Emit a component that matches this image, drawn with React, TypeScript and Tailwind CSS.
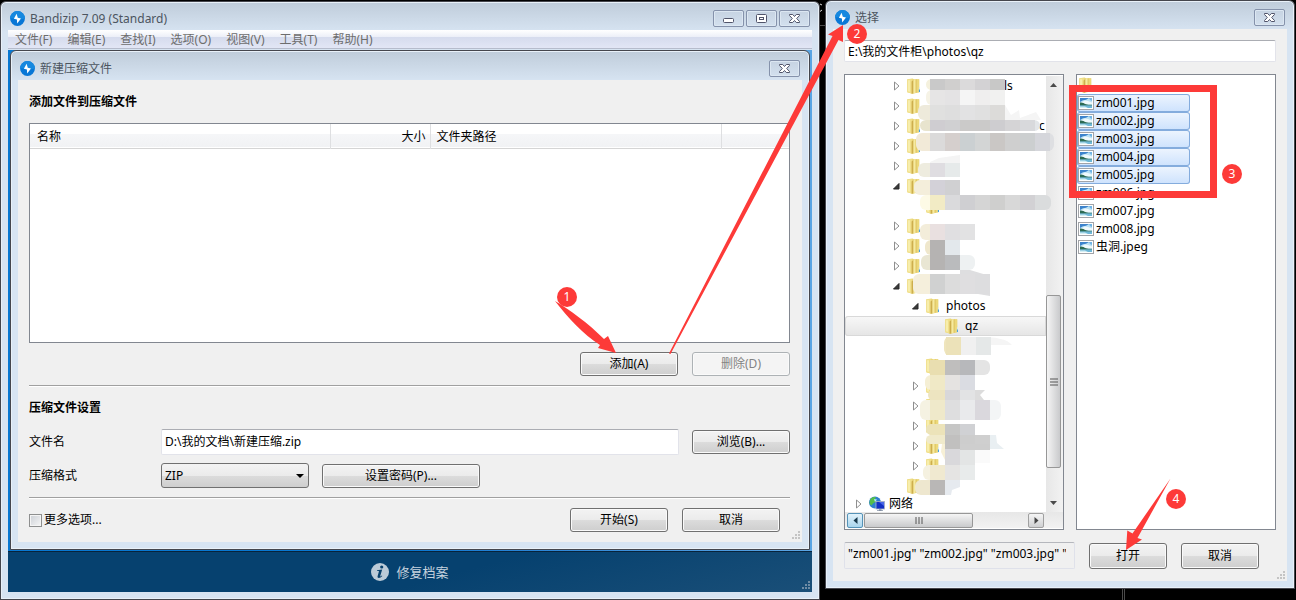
import type { ButtonHTMLAttributes, ReactNode } from "react";
import clsx from "clsx";

type CaptionKind = "minimize" | "maximize" | "close";

type TreeRow = {
  indent: string;
  icon?: "folder" | "network";
  state?: "open" | "closed";
  label?: string;
  labelGap?: string;
  selected?: boolean;
};

const MENU = ["文件(F)", "编辑(E)", "查找(I)", "选项(O)", "视图(V)", "工具(T)", "帮助(H)"];

const ROOT = "pl-[10px]";
const LEVEL_1 = "pl-[48px]";
const LEVEL_2 = "pl-[67px]";
const LEVEL_3 = "pl-[86px]";

const TREE: TreeRow[] = [
  { indent: LEVEL_1, state: "closed", label: "ls", labelGap: "pl-[83px]" },
  { indent: LEVEL_1, state: "closed" },
  { indent: LEVEL_1, state: "closed", label: "c", labelGap: "pl-[118px]" },
  { indent: LEVEL_1, state: "closed" },
  { indent: LEVEL_1, state: "closed" },
  { indent: LEVEL_1, state: "open" },
  { indent: LEVEL_2 },
  { indent: LEVEL_1, state: "closed" },
  { indent: LEVEL_1, state: "closed" },
  { indent: LEVEL_1, state: "closed" },
  { indent: LEVEL_1, state: "open" },
  { indent: LEVEL_2, state: "open", label: "photos" },
  { indent: LEVEL_3, label: "qz", selected: true },
  { indent: LEVEL_3 },
  { indent: LEVEL_2 },
  { indent: LEVEL_2, state: "closed" },
  { indent: LEVEL_2, state: "closed" },
  { indent: LEVEL_2, state: "closed" },
  { indent: LEVEL_2, state: "closed" },
  { indent: LEVEL_2, state: "closed" },
  { indent: LEVEL_1 },
  { indent: ROOT, icon: "network", state: "closed", label: "网络", labelGap: "pl-1" },
];

const FILES = [
  { name: "zm001.jpg", selected: true },
  { name: "zm002.jpg", selected: true },
  { name: "zm003.jpg", selected: true },
  { name: "zm004.jpg", selected: true },
  { name: "zm005.jpg", selected: true },
  { name: "zm006.jpg", selected: false },
  { name: "zm007.jpg", selected: false },
  { name: "zm008.jpg", selected: false },
  { name: "虫洞.jpeg", selected: false },
];

// Pixelated strips over private folder names: top, height, round left start, its fill,
// then 15px cells from cellX, and an optional rounded tail.
type Strip = {
  y: number;
  h: number;
  capX: number;
  cap: string;
  cellX: number;
  cells: string[];
  endX?: number;
  end?: string;
};

const STRIPS: Strip[] = [
  { y: 79, h: 11, capX: 926, cap: "#f5f1dd", cellX: 930, cells: ["#c9c9c9", "#d0cfce", "#dbdadb", "#d3d2d4", "#c8c8c7"] },
  { y: 90, h: 15, capX: 926, cap: "#f6f3e6", cellX: 930, cells: ["#e6e5e5", "#e4e3e4", "#f5f5f5", "#efeeee", "#f1f1f0"] },
  { y: 105, h: 15, capX: 918, cap: "#eeeadb", cellX: 930, cells: ["#e0e0df", "#dedede", "#e2e2e3", "#e0e0e0", "#dcdbd9"] },
  { y: 120, h: 11, capX: 920, cap: "#e8e4ce", cellX: 930, cells: ["#cfcdd1", "#d0d0d2", "#cbcac9", "#cbcac9", "#cecdd0", "#d5d4d6", "#d8d9dc"], endX: 1040, end: "#e3e6e9" },
  { y: 133, h: 18, capX: 916, cap: "#f2ead8", cellX: 930, cells: ["#dbdada", "#d5cfcd", "#cbd0d2", "#d3d5d5", "#cac7c5", "#cfcfcf", "#cccfd0", "#d5d6db"], endX: 1054, end: "#dedfe2" },
  { y: 163, h: 14, capX: 918, cap: "#eeecdf", cellX: 930, cells: ["#dfdde1", "#e6eaea"] },
  { y: 180, h: 15, capX: 914, cap: "#f4eedb", cellX: 930, cells: ["#d3d1d8", "#d0d0d2"] },
  { y: 195, h: 15, capX: 920, cap: "#fdfae6", cellX: 930, cells: ["#f2ebc5", "#dadadc", "#cfcfd2", "#d5d5d5", "#cfcfce", "#d8d8d8", "#d2d1d4"], endX: 1051, end: "#dadcdd" },
  { y: 224, h: 16, capX: 920, cap: "#f3edda", cellX: 930, cells: ["#e9e0e0", "#e0dfe1", "#e2e2e3"] },
  { y: 240, h: 15, capX: 925, cap: "#efe7cc", cellX: 930, cells: ["#b5b3b2", "#e3e8ec"] },
  { y: 255, h: 15, capX: 921, cap: "#e9e6d3", cellX: 930, cells: ["#b5b3b2", "#babbbd"], endX: 975, end: "#eef1f2" },
  { y: 274, h: 20, capX: 913, cap: "#f5efdc", cellX: 930, cells: ["#d0d1d1", "#dcdcdc", "#dfdee0", "#dddddf"] },
  { y: 337, h: 18, capX: 944, cap: "#efe5bd", cellX: 946, cells: ["#ece2b9", "#f0f0f0", "#e5e8e8"] },
  { y: 360, h: 15, capX: 929, cap: "#e9deb0", cellX: 930, cells: ["#e9deb0", "#bfbebd", "#b7b8bb"], endX: 990, end: "#e4e4e4" },
  { y: 375, h: 15, capX: 925, cap: "#f5efd5", cellX: 930, cells: ["#f0e9c6", "#e5e3e1", "#dadce2"] },
  { y: 390, h: 10, capX: 928, cap: "#ede4c0", cellX: 930, cells: ["#ede4c0", "#d8d7d9", "#e2e3e4"] },
  { y: 400, h: 20, capX: 920, cap: "#f5f2e2", cellX: 930, cells: ["#efe9ca", "#dededf", "#e9eaec", "#dad8dd"], endX: 1001, end: "#f3f5f6" },
  { y: 424, h: 11, capX: 926, cap: "#ece3b9", cellX: 930, cells: ["#ece3b9", "#c6c6c5", "#d0d1d4"] },
  { y: 435, h: 9, capX: 926, cap: "#f0eacb", cellX: 930, cells: ["#f0eacb", "#c1c0bf", "#cdcdcd", "#cfcfcf"] },
  { y: 465, h: 15, capX: 923, cap: "#f5f1e0", cellX: 930, cells: ["#f0e9d0", "#e5e4e3", "#e8ebeb"] },
  { y: 480, h: 15, capX: 915, cap: "#eee7cf", cellX: 930, cells: ["#b9b7b6"] },
];

function BandizipIcon() {
  return (
    <svg className="size-[15px] shrink-0" viewBox="0 0 15 15" aria-hidden="true">
      <circle cx="7.5" cy="7.5" r="7.4" fill="#0877d6" />
      <path d="M0.1 7.5a7.4 7.4 0 0 1 14.8 0c-5 2-10-1-14.8 0z" fill="#1688df" />
      <path d="M6.6 2.8 3.9 7.7l3 .8.3 4 3.8-4.9-3.2-.9z" fill="#fff" />
    </svg>
  );
}

function CaptionButton({ kind }: { kind: CaptionKind }) {
  return (
    <button
      type="button"
      aria-label={kind}
      className="flex h-[17px] w-[31px] items-center justify-center rounded-[2px] border border-[#8592ab] bg-linear-to-b from-[#c6d3e2] to-[#d3e0ee] shadow-[inset_0_0_0_1px_#dce7f2]"
    >
      <svg width="13" height="11" viewBox="0 0 13 11" fill="#fff" stroke="#50546a" aria-hidden="true">
        {kind === "minimize" && <rect x="1.5" y="5.5" width="10" height="4" rx="1" />}
        {kind === "maximize" && (
          <>
            <rect x="1.5" y="1.5" width="10" height="8" rx="1" />
            <rect x="4.5" y="4.5" width="4" height="2" />
          </>
        )}
        {kind === "close" && (
          <path d="M1.5 1.5h3.2l1.8 2 1.8-2h3.2v1L8.7 5.5l2.8 3v1H8.3l-1.8-2-1.8 2H1.5v-1l2.8-3-2.8-3z" />
        )}
      </svg>
    </button>
  );
}

type FrameProps = {
  title: string;
  captions: CaptionKind[];
  className?: string;
  children: ReactNode;
};

function WindowFrame({ title, captions, className, children }: FrameProps) {
  return (
    <section
      className={clsx(
        "min-w-0 rounded-t-[6px] border border-[#45464d] bg-[#d7e4f2] bg-[linear-gradient(#bfccda,#d7e4f2_30px)] px-[7px] pb-[7px] shadow-[inset_0_0_0_1px_#e9f1f9]",
        className,
      )}
    >
      <header className="flex h-7 items-center gap-[5px] px-[2px] pt-1">
        <BandizipIcon />
        <h1 className="flex-1 truncate pt-[2px] text-[#4c5560]">{title}</h1>
        <div className="flex gap-[2px]">
          {captions.map((kind) => (
            <CaptionButton key={kind} kind={kind} />
          ))}
        </div>
      </header>
      {children}
    </section>
  );
}

function PushButton({ className, ...props }: ButtonHTMLAttributes<HTMLButtonElement>) {
  return (
    <button
      type="button"
      className={clsx(
        "shrink-0 rounded-[3px] border border-[#707070] bg-[linear-gradient(#f3f3f3,#ebebeb_50%,#dcdcdc_50%,#cecece)] shadow-[inset_0_0_0_1px_#fafafa] disabled:border-[#adb2b5] disabled:bg-[#f4f4f4] disabled:bg-none disabled:text-[#838383]",
        className,
      )}
      {...props}
    />
  );
}

function Divider() {
  return <hr className="mt-[9px] h-[2px] border-0 border-t border-[#a0a0a0] bg-white" />;
}

function SizeGrip({ className }: { className?: string }) {
  return (
    <svg className={clsx("absolute size-[9px]", className)} viewBox="0 0 9 9" fill="currentColor" aria-hidden="true">
      <path d="M7 0h2v2H7zM7 3h2v2H7zM7 6h2v2H7zM4 3h2v2H4zM4 6h2v2H4zM1 6h2v2H1z" />
    </svg>
  );
}

function FolderIcon() {
  return (
    <svg className="h-4 w-[14px] shrink-0" viewBox="0 0 14 16" aria-hidden="true">
      <path d="M.3 1.200 5.500.5l1.500.8h5.200v13L8 15.300l-3 .5-4.700-1.500z" fill="#ead779" />
      <path d="M.3 1.300h4.500v14.300L.3 14.300z" fill="#f1e08c" />
      <path d="M1.200 2.200h1.600v11.500l-1.600-.4z" fill="#f9f1b4" />
      <path d="M4.600 3.500 6.500 2v13.600l-1.900.1z" fill="#cdae4d" />
      <path d="M6.500 2.300 8.700 1.300v13.400l-2.200.9z" fill="#f6eaa0" />
      <path d="M8.700 1.300h1v13.200l-1 .2z" fill="#d9bf5e" />
      <path d="M9.700 1.300h2.500v13l-2.500.3z" fill="#ecd87a" />
      <path d="M11.900 9h1v5.300h-1z" fill="#dbe9ee" />
      <path d="M11.900 11.500h1.100v2.500h-1.100z" fill="#4ba3dc" />
    </svg>
  );
}

function NetworkIcon() {
  return (
    <svg className="h-4 w-4 shrink-0" viewBox="0 0 16 16" aria-hidden="true">
      <circle cx="6" cy="6.500" r="6" fill="#2d7fd0" />
      <path d="M1 3.700C3 1 5 .7 7 1.400L5.600 3.600 7 5.400 4 7.400 2.500 9.600.5 7.800z" fill="#55bf49" />
      <path d="M5 3l3 .5L6 6z" fill="#b9ebf5" />
      <rect x="7" y="5.500" width="8.600" height="7.500" fill="#1330c5" stroke="#b0b9c8" strokeWidth=".8" />
      <path d="M10 6h5v4z" fill="#4967e8" />
      <path d="M10 13.300h2.500v.9H14v.8H8v-.8h2z" fill="#8290a5" />
    </svg>
  );
}

function PictureIcon() {
  return (
    <svg className="h-[14px] w-4 shrink-0" viewBox="0 0 16 14" aria-hidden="true">
      <rect x=".5" y=".5" width="15" height="13" fill="#fff" stroke="#a2a4a8" />
      <rect x="2" y="2" width="12" height="10" fill="#b9e0f4" />
      <path d="M2 2h9L8 3.800 5 4.200 2 6z" fill="#3c83cc" />
      <path d="M11 2h3v3l-2-1z" fill="#6fb4e6" />
      <path d="M3 6.500 7 4.500l3 .5 4 1.500v2H5z" fill="#eff9fc" />
      <path d="M2 6.500c2-.5 4 .7 6 1.700 2 .5 4 .7 6 .6v.9H2z" fill="#2c6a52" />
      <path d="M2 9.500h12V12H2z" fill="#6db7d8" />
      <path d="M2 10.500h5l3 1.500H2z" fill="#d3eef3" />
    </svg>
  );
}

function Expander({ state }: { state?: "open" | "closed" }) {
  return (
    <svg className="h-3 w-[14px] shrink-0" viewBox="0 0 14 12" aria-hidden="true">
      {state === "closed" && <path d="M1.500 2v8l4.500-4z" fill="#fff" stroke="#8f8f8f" />}
      {state === "open" && <path d="M6 3.500V9H.5z" fill="#3a3a3a" stroke="#262626" />}
    </svg>
  );
}

function Mosaic() {
  return (
    <svg className="pointer-events-none absolute top-0 left-0 h-[436px] w-[216px]" viewBox="845 76 216 436" aria-hidden="true">
      <path d="M930 162l9-4 21-3v8h-30z" fill="#f4f4f4" />
      <path d="M1005 105l6 10 8-5 1 8 16-6 5 8h-36z" fill="#f5f5f5" />
      <path d="M960 270h10l20 6v20l-30-5z" fill="#dedee0" />
      <path d="M989 337c8 1 18 2 23 8h-23z" fill="#f5f5f5" />
      <path d="M975 390h10l-5 5 4 5h-9z" fill="#dcdcdc" />
      <path d="M990 435h6l1 8 7 6h-14z" fill="#e9eff2" />
      <path d="M942 444h3v16l-4-8z" fill="#f7f0d6" />
      <path d="M945 444h15v21h-15z" fill="#d9d8db" />
      <path d="M945 435h15v14h-15z" fill="#c1c0bf" />
      <path d="M960 444h30v6h-30z" fill="#cecece" />
      <path d="M960 450h15v15h-15z" fill="#e3e5e5" />
      <path d="M975 450h15v13h-15z" fill="#fafafa" />
      <path d="M945 480h15v7l-8 3-1 5h-6z" fill="#e6eaef" />
      {STRIPS.map((strip) => {
        const cellsEnd = strip.cellX + strip.cells.length * 15;
        return (
          <g key={strip.y}>
            <rect x={strip.capX} y={strip.y} width={strip.cellX - strip.capX + 7} height={strip.h} rx="6" fill={strip.cap} />
            {strip.end && (
              <rect x={cellsEnd - 15} y={strip.y} width={Math.max(strip.endX! - cellsEnd, 0) + 15} height={strip.h} rx="6" fill={strip.end} />
            )}
            {strip.cells.map((fill, index) => (
              <rect key={index} x={strip.cellX + index * 15} y={strip.y} width="15" height={strip.h} fill={fill} />
            ))}
          </g>
        );
      })}
    </svg>
  );
}

function FolderTree() {
  return (
    <div className="min-w-0 border border-[#828790] bg-white py-px">
      <div className="relative flex h-[436px]">
        <ul className="min-w-0 flex-1 pl-px">
          {TREE.map((row, index) => (
            <li
              key={index}
              className={clsx(
                "-ml-px flex items-center",
                row.icon === "network" ? "h-4" : "h-5",
                row.indent,
                row.selected &&
                  "rounded-l-[3px] bg-linear-to-b from-[#f8f8f8] to-[#e5e5e5] shadow-[inset_0_0_0_1px_#d9d9d9]",
              )}
            >
              <Expander state={row.state} />
              {row.icon === "network" ? <NetworkIcon /> : <FolderIcon />}
              {row.label && <span className={row.labelGap ?? "pl-[6px]"}>{row.label}</span>}
            </li>
          ))}
        </ul>
        <div className="flex w-[17px] flex-col items-center bg-linear-to-r from-[#e7e7e7] to-[#f2f2f2] pr-[2px]">
          <svg className="mt-[6px]" width="9" height="6" aria-hidden="true">
            <path d="M1 5l3.500-4L8 5z" fill="#4b4b4b" />
          </svg>
          <div className="mt-[207px] flex h-[173px] w-[15px] items-center justify-center rounded-[2px] border border-[#979797] bg-linear-to-r from-[#f5f5f5] to-[#c9cacc]">
            <svg width="8" height="8" aria-hidden="true">
              <path d="M0 1h8M0 4h8M0 7h8" stroke="#555" />
            </svg>
          </div>
          <svg className="mt-8" width="9" height="6" aria-hidden="true">
            <path d="M1 1l3.500 4L8 1z" fill="#4b4b4b" />
          </svg>
        </div>
        <Mosaic />
      </div>
      <div className="flex h-4 items-center bg-linear-to-b from-[#e7e7e7] to-[#f2f2f2] pr-[19px] pl-[2px]">
        <button
          type="button"
          aria-label="Scroll left"
          className="flex h-[15px] w-4 items-center justify-center rounded-[2px] border border-[#5593b8] bg-linear-to-b from-[#e2f3fc] to-[#a9d5ed]"
        >
          <svg width="5" height="7" aria-hidden="true">
            <path d="M4.500 0v7L.5 3.500z" fill="#17384c" />
          </svg>
        </button>
        <div className="ml-px flex h-[15px] w-[109px] items-center justify-center rounded-[2px] border border-[#979797] bg-linear-to-b from-[#f5f5f5] to-[#c9cacc]">
          <svg width="8" height="7" aria-hidden="true">
            <path d="M1 0v7M4 0v7M7 0v7" stroke="#555" />
          </svg>
        </div>
        <button
          type="button"
          aria-label="Scroll right"
          className="ml-auto flex h-[15px] w-4 items-center justify-center rounded-[2px] border border-[#a0a0a0] bg-linear-to-b from-[#f5f5f5] to-[#cfd0d2]"
        >
          <svg width="5" height="7" aria-hidden="true">
            <path d="M.5 0v7l4-3.500z" fill="#444" />
          </svg>
        </button>
      </div>
    </div>
  );
}

function FileList() {
  return (
    <ul className="min-w-0 border border-[#828790] bg-white pt-px">
      <li className="flex h-[18px] items-center pl-[2px]">
        <FolderIcon />
      </li>
      {FILES.map((file) => (
        <li
          key={file.name}
          className={clsx(
            "flex h-[18px] w-[113px] items-center gap-[2px] rounded-[3px] pl-px",
            file.selected &&
              "bg-linear-to-b from-[#eef5fe] to-[#cde2fd] shadow-[inset_0_0_0_1px_#84acdd]",
          )}
        >
          <PictureIcon />
          {file.name}
        </li>
      ))}
    </ul>
  );
}

function NewArchiveDialog() {
  return (
    <WindowFrame title="新建压缩文件" captions={["close"]} className="pt-px">
      <form className="relative bg-[#f0f0f0] pt-3 pr-3 pb-[10px] pl-[11px]">
        <h2 className="h-5 leading-5 font-bold">添加文件到压缩文件</h2>
        <div className="mt-[11px] h-[220px] border border-[#828790] bg-white">
          <table className="w-full table-fixed border-collapse">
            <thead>
              <tr className="h-6 border-b border-[#d5d5d5] bg-[linear-gradient(#ffffff_45%,#f5f6f8_45%,#f1f2f4)] [&>th]:border-r [&>th]:border-[#dedfe1] [&>th]:pt-[2px] [&>th]:font-normal">
                <th className="w-[300px] pl-[7px] text-left">名称</th>
                <th className="w-[100px] pr-1 text-right">大小</th>
                <th className="w-[291px] pl-[6px] text-left">文件夹路径</th>
                <td />
              </tr>
            </thead>
            <tbody />
          </table>
        </div>
        <div className="mt-[9px] flex h-6 justify-end gap-[14px]">
          <PushButton className="w-[98px]">添加(A)</PushButton>
          <PushButton className="w-[98px]" disabled>
            删除(D)
          </PushButton>
        </div>
        <Divider />
        <h2 className="mt-[11px] h-5 leading-5 font-bold">压缩文件设置</h2>
        <div className="mt-[11px] flex h-[26px] items-center">
          <label htmlFor="archive-name" className="w-[132px]">
            文件名
          </label>
          <input
            id="archive-name"
            defaultValue="D:\我的文档\新建压缩.zip"
            className="h-full min-w-0 flex-1 rounded-[2px] border border-[#e2e3ea] border-t-[#abadb3] bg-white px-[3px] pb-[2px]"
          />
          <PushButton className="ml-[13px] h-6 w-[98px]">浏览(B)...</PushButton>
        </div>
        <div className="mt-2 flex h-[25px] items-center">
          <label htmlFor="archive-format" className="w-[132px]">
            压缩格式
          </label>
          <div className="relative h-full w-[148px]">
            <select
              id="archive-format"
              className="h-full w-full appearance-none rounded-[3px] border border-[#707070] bg-[linear-gradient(#f3f3f3,#ebebeb_50%,#dcdcdc_50%,#cecece)] px-[3px]"
            >
              <option>ZIP</option>
            </select>
            <svg className="pointer-events-none absolute top-[11px] right-[5px]" width="8" height="4" aria-hidden="true">
              <path d="M0 0h8L4 4z" />
            </svg>
          </div>
          <PushButton className="ml-[13px] h-6 w-[158px]">设置密码(P)...</PushButton>
        </div>
        <Divider />
        <div className="mt-[9px] flex h-6 items-center gap-[14px] pr-[10px]">
          <label className="mr-auto flex items-center gap-[2px]">
            <input
              type="checkbox"
              className="size-[13px] appearance-none border border-[#8e8f8f] bg-linear-to-br from-[#cbcfd5] to-[#f6f6f6] shadow-[inset_0_0_0_1px_#f4f4f4]"
            />
            更多选项...
          </label>
          <PushButton className="h-6 w-[98px]">开始(S)</PushButton>
          <PushButton className="h-6 w-[98px]">取消</PushButton>
        </div>
        <SizeGrip className="right-[2px] bottom-[2px] text-[#c4c4c4]" />
      </form>
    </WindowFrame>
  );
}

function MainWindow() {
  return (
    <WindowFrame title="Bandizip 7.09 (Standard)" captions={["minimize", "maximize", "close"]} className="mt-px">
      <nav className="flex h-[19px] items-center gap-[15px] border-b border-[#b6bccc] bg-[linear-gradient(#ffffff,#eceff8_38%,#d5dbed_38%,#e2e6f5)] pt-[2px] pl-[7px] text-[#6d6d6d]">
        {MENU.map((item) => (
          <button key={item} type="button" className="whitespace-nowrap">
            {item}
          </button>
        ))}
      </nav>
      <main className="mt-px bg-linear-to-r from-[#0878d2] via-[#0878d2] to-[#5aa5e4] px-[2px] pb-px">
        <NewArchiveDialog />
      </main>
      <footer className="relative flex h-[41px] items-center justify-center gap-[7px] border-t border-[#08233b] bg-[linear-gradient(165deg,#06416f_55%,#1a4f78)] text-[13px] text-[#c6d3df]">
        <svg className="size-[18px]" viewBox="0 0 18 18" aria-hidden="true">
          <circle cx="9" cy="9" r="9" fill="#bccbd8" />
          <circle cx="10.700" cy="4" r="1.600" fill="#08406c" />
          <path d="M6 7.200 11.200 6.600l-2 6.300c-.2.900.5.700 1.600-.4l.5.500c-2 2.400-5.300 2.700-4.700.3l1.300-4.700c.2-.7-.3-.7-1.800-.7z" fill="#08406c" />
        </svg>
        修复档案
        <SizeGrip className="right-[2px] bottom-[2px] text-[#6f8ca5]" />
      </footer>
    </WindowFrame>
  );
}

function PickerWindow() {
  return (
    <WindowFrame title="选择" captions={["close"]}>
      <form className="relative bg-[#f0f0f0] px-[11px] pt-[11px] pb-3">
        <input
          aria-label="路径"
          defaultValue="E:\我的文件柜\photos\qz"
          className="block h-[22px] w-full rounded-[2px] border border-[#e2e3ea] border-t-[#abadb3] bg-white px-[3px]"
        />
        <div className="mt-3 grid grid-cols-[220fr_200fr] gap-3">
          <FolderTree />
          <FileList />
        </div>
        <div className="mt-3 flex h-[27px] items-end gap-[14px] pr-[17px]">
          <input
            aria-label="文件名"
            readOnly
            defaultValue={'"zm001.jpg" "zm002.jpg" "zm003.jpg" "zm004.jpg" "zm005.jpg"'}
            className="h-full min-w-0 flex-1 rounded-[2px] border border-[#dfe1ea] border-t-[#b5b7bd] bg-[#f0f0f0] pr-2 pb-1 pl-[3px]"
          />
          <PushButton className="h-[26px] w-[78px]">打开</PushButton>
          <PushButton className="h-[26px] w-[78px]">取消</PushButton>
        </div>
        <SizeGrip className="right-[2px] bottom-[1px] text-[#c4c4c4]" />
      </form>
    </WindowFrame>
  );
}

const STEPS = [
  { step: 1, x: 567, y: 297 },
  { step: 2, x: 857, y: 34 },
  { step: 3, x: 1232, y: 174 },
  { step: 4, x: 1176, y: 499 },
];

// Red arrows, frame and numbers that walk through the four steps
function StepMarks() {
  return (
    <svg className="pointer-events-none absolute top-0 left-0 h-[600px] w-[1296px]" viewBox="0 0 1296 600" fill="#fd3a38">
      <path d="M820 25.500h5M1122.500 589v11M1124.500 589v11" stroke="#4a4a4a" />
      <path d="M820 4l2 1M820 11.500l2-1.500" stroke="#ddd" />
      <path d="M555 301c15 9 33 22 49 38l4-3 8 17-18-5 2-3c-17-11-32-27-45-44z" />
      <path d="M669 353.500 832.500 36l-4.500-1.500L843 25v17l-4.500-2L670.500 354z" />
      <path d="M1170.500 478.500 1137.500 538l4.500 1.500-16 10.500 1.300-19.500 5.200 3z" />
      <rect x="1072.500" y="88.500" width="141" height="106" fill="none" stroke="#fd3a38" strokeWidth="7" />
      {STEPS.map(({ step, x, y }) => (
        <g key={step}>
          <circle cx={x} cy={y} r="10" />
          <text x={x} y={y + 4} textAnchor="middle" fontSize="12" fill="#fff">
            {step}
          </text>
        </g>
      ))}
    </svg>
  );
}

export default function App() {
  return (
    <div className="relative grid min-h-screen grid-cols-[820fr_470fr] items-start gap-[5px] overflow-hidden bg-black pr-px font-['Noto_Sans','Noto_Sans_CJK_SC',sans-serif] text-[12px] leading-4 text-black">
      <MainWindow />
      <PickerWindow />
      <StepMarks />
    </div>
  );
}
